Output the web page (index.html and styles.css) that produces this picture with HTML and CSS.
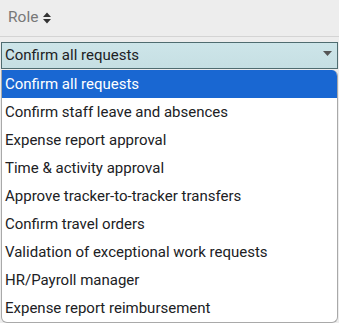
FILE: index.html
```html
<!DOCTYPE html>
<html>
<head>
<meta charset="utf-8">
<link rel="stylesheet" href="styles.css">
</head>
<body>
<div class="page">
  <div class="header">
    <span class="label">Role</span>
    <svg class="sort" width="8" height="12" viewBox="0 0 8 12"><path d="M0 5 L4 0.5 L8 5 Z M0 7 L4 11.5 L8 7 Z" fill="#333"/></svg>
  </div>
  <div class="cell">
    <div class="select">
      <span class="value">Confirm all requests</span>
      <svg class="caret" width="9" height="5" viewBox="0 0 9 5"><path d="M0 0 L9 0 L4.5 5 Z" fill="#555"/></svg>
    </div>
    <ul class="popup">
      <li class="opt active">Confirm all requests</li>
      <li class="opt">Confirm staff leave and absences</li>
      <li class="opt">Expense report approval</li>
      <li class="opt">Time &amp; activity approval</li>
      <li class="opt">Approve tracker-to-tracker transfers</li>
      <li class="opt">Confirm travel orders</li>
      <li class="opt">Validation of exceptional work requests</li>
      <li class="opt">HR/Payroll manager</li>
      <li class="opt">Expense report reimbursement</li>
    </ul>
  </div>
</div>
</body>
</html>
```
FILE: styles.css
```css
* { box-sizing: border-box; }
html, body { margin: 0; padding: 0; }
body {
  width: 339px;
  height: 323px;
  overflow: hidden;
  background: #ededed;
  font-family: Roboto, "Noto Sans", sans-serif;
  font-size: 15px;
  color: #202124;
}
.page { position: relative; }
.header {
  height: 37px;
  display: flex;
  align-items: center;
  gap: 5px;
  padding-left: 8px;
  padding-bottom: 2px;
  border-bottom: 1px solid #d4d4d4;
}
.label { color: #787878; font-size: 15.5px; }
.sort { margin-top: 1px; }
.cell { position: relative; padding: 5px 1px 0 1px; }
.select {
  height: 27px;
  border: 1px solid #4f6c70;
  background: linear-gradient(#cde5e9, #c6dfe3);
  display: flex;
  align-items: center;
  justify-content: space-between;
  padding: 0 5px 1px 3px;
  font-size: 15px;
}
.caret { margin-right: 0px; margin-top: -3px; }
.popup {
  position: absolute;
  left: 1px;
  top: 33px;
  width: 337px;
  margin: 0;
  padding: 0;
  list-style: none;
  background: #fff;
  border: 1px solid #a9a9a9;
  border-top: none;
  border-radius: 0 6px 6px 6px;
  overflow: hidden;
}
.opt {
  height: 28px;
  line-height: 29px;
  padding-left: 3px;
  white-space: nowrap;
}
.opt.active { background: #1967d2; color: #fff; }
```
